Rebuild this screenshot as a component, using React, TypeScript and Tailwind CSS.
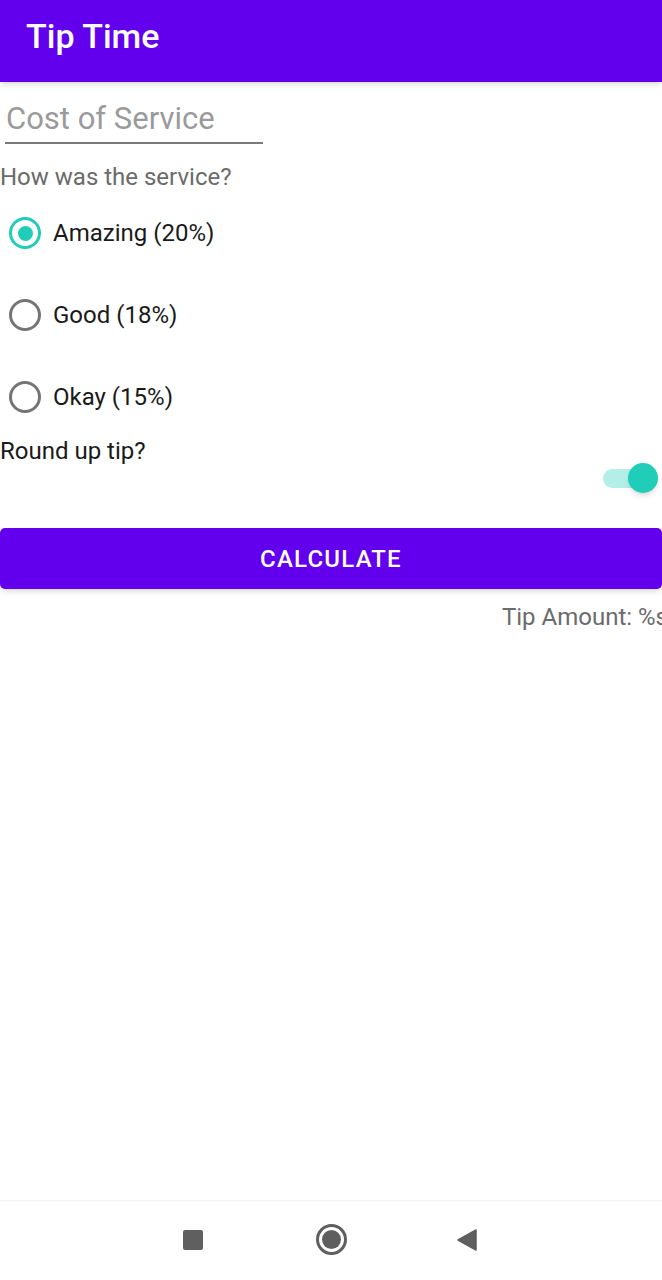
import React from "react";

const options = ["Amazing (20%)", "Good (18%)", "Okay (15%)"];

function Radio({ checked }: { checked: boolean }) {
  return (
    <div
      className={
        "w-[32px] h-[32px] rounded-full border-[3px] flex items-center justify-center " +
        (checked ? "border-[#1fcdb8]" : "border-[#757575]")
      }
    >
      {checked && <div className="w-[15px] h-[15px] rounded-full bg-[#1fcdb8]" />}
    </div>
  );
}

export default function App() {
  return (
    <div className="w-[662px] h-[1280px] bg-white flex flex-col overflow-hidden font-['Roboto',sans-serif]">
      {/* app bar */}
      <div className="h-[82px] bg-[#6200ee] flex items-center px-[26px] pb-[10px] shadow-md shrink-0">
        <span className="text-white text-[34px] font-medium leading-[40px]">Tip Time</span>
      </div>

      {/* cost input */}
      <div className="pl-[5px] pt-[17px]">
        <div className="w-[258px] border-b-2 border-[#7a7a7a] pb-[3px]">
          <span className="pl-[1px] text-[31px] text-[#9a9a9a] leading-[40px]">Cost of Service</span>
        </div>
      </div>

      <div className="mt-[18px] text-[24px] text-[#6b6b6b] leading-[30px]">How was the service?</div>

      {/* radio group */}
      <div className="flex flex-col">
        {options.map((o, i) => (
          <div key={o} className="h-[82px] flex items-center pl-[9px] gap-[12px]">
            <Radio checked={i === 0} />
            <span className="text-[24px] text-[#1a1a1a]">{o}</span>
          </div>
        ))}
      </div>

      {/* round up */}
      <div className="h-[60px] flex items-start justify-between">
        <span className="mt-[1px] text-[24px] text-[#1a1a1a] leading-[24px]">Round up tip?</span>
        <div className="relative mt-[25px] w-[56px] h-[30px] mr-[4px] flex items-center">
          <div className="ml-[1px] w-[46px] h-[19px] rounded-full bg-[#b4efe7]" />
          <div className="absolute right-0 top-0 w-[30px] h-[30px] rounded-full bg-[#1fcdb8] shadow-md" />
        </div>
      </div>

      {/* calculate */}
      <button className="mt-[30px] h-[61px] w-full rounded-[5px] bg-[#6200ee] shadow-md text-white text-[24px] font-medium tracking-[0.05em]">
        CALCULATE
      </button>

      <div className="mt-[14px] flex justify-end whitespace-nowrap">
        <span className="text-[24px] text-[#6b6b6b] leading-[28px] -mr-[6px]">Tip Amount: %s</span>
      </div>

      <div className="flex-1" />

      {/* nav bar */}
      <div className="h-[80px] border-t border-[#efefef] flex items-center justify-center shrink-0">
        <div className="relative w-full h-full">
          <div className="absolute left-[183px] top-[29px] w-[20px] h-[20px] rounded-[2px] bg-[#5f5f5f]" />
          <div className="absolute left-[316px] top-[23px] w-[31px] h-[31px] rounded-full border-[3px] border-[#5f5f5f] flex items-center justify-center">
            <div className="w-[19px] h-[19px] rounded-full bg-[#5f5f5f]" />
          </div>
          <svg className="absolute left-[457px] top-[28px]" width="20" height="22" viewBox="0 0 20 22">
            <path d="M19 1 L1 11 L19 21 Z" fill="#5f5f5f" stroke="#5f5f5f" strokeLinejoin="round" strokeWidth="1.5" />
          </svg>
        </div>
      </div>
    </div>
  );
}
